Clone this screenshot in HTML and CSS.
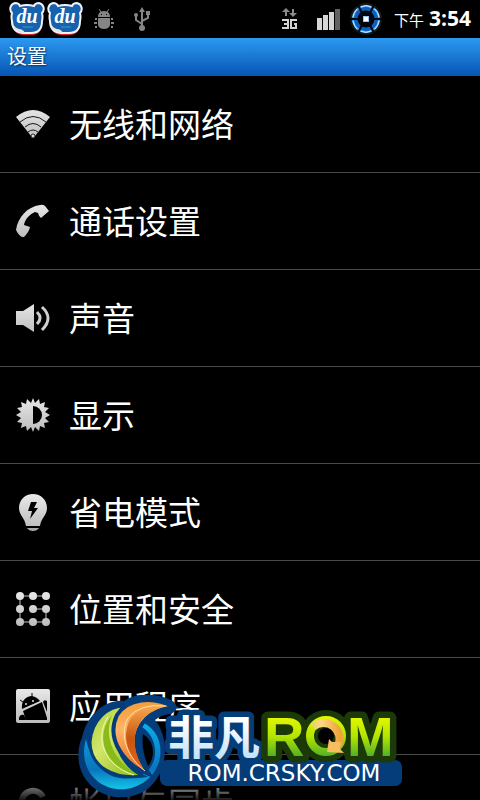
FILE: index.html
```html
<!DOCTYPE html>
<html lang="zh-CN">
<head>
  <meta charset="UTF-8" />
  <meta name="viewport" content="width=device-width, initial-scale=1.0" />
  <title>设置</title>
  <link rel="stylesheet" href="styles.css">
</head>
<body>
  <!-- shared gradients and symbols -->
  <svg class="defs" aria-hidden="true">
    <defs>
      <linearGradient id="silver" x1="0" y1="0" x2="0" y2="34" gradientUnits="userSpaceOnUse">
        <stop offset="0" stop-color="#e8e8e8" />
        <stop offset="1" stop-color="#bcbcbc" />
      </linearGradient>
      <symbol id="du" viewBox="0 0 36 34">
        <path d="M5 25Q5 33 15 33H24Q33 32 33 22Z" fill="#d8201c" />
        <path d="M3 11C0 8 1 2 6 1Q10 1 11 4Q18 2 25 4Q26 1 30 1C35 2 36 8 33 11Q34 15 33 19Q33 31 22 31H14Q3 30 3 19Q2 15 3 11Z" fill="#1762ae" stroke="#eef3f8" stroke-width="2" />
        <path d="M4 22Q6 31 16 31Q14 27 10 27Q6 26 4 22Z" fill="#e4e4e4" />
        <text x="18" y="21" text-anchor="middle" class="du-text">du</text>
        <path d="M14 25H24" stroke="#2f9fd0" />
      </symbol>
    </defs>
  </svg>

  <div class="status-bar">
    <div class="notices">
      <svg class="du-icon" viewBox="0 0 36 34"><use href="#du" /></svg>
      <svg class="du-icon" viewBox="0 0 36 34"><use href="#du" /></svg>
      <svg class="debug-icon" viewBox="0 0 20 20" fill="#858585">
        <path d="M5 0L7 3M15 0L13 3" stroke="#858585" />
        <path d="M4 8Q4 2 10 2T16 8ZM4 9H16V16Q15 20 10 20T4 16Z" />
        <path d="M1 9H3V11H1ZM0 13H3V15H0ZM1 17H3V19H1ZM17 9H19V11H17ZM17 13H20V15H17ZM17 17H19V19H17Z" />
        <path d="M7 5H8V6H7ZM12 5H13V6H12Z" fill="#000" />
      </svg>
      <svg class="usb-icon" viewBox="0 0 16 24" fill="#858585">
        <path d="M8 3V20M8 17L2 13V8M8 14L14 11V7" fill="none" stroke="#858585" stroke-width="2" />
        <path d="M8 0L11 5H5Z" />
        <path d="M12 4H16V8H12Z" />
        <circle cx="2" cy="8" r="2" />
        <circle cx="8" cy="21" r="3" />
      </svg>
    </div>
    <div class="signals">
      <svg class="data-icon" viewBox="0 0 16 22">
        <path d="M4 0L8 4H5V8H3V4H0ZM11 9L7 5H10V1H12V5H15Z" fill="#8b8b8b" />
        <path d="M0 12H6V20H0M2 16H6M15 12H9V20H14V16H12" fill="none" stroke="#d2d2d2" stroke-width="2" />
      </svg>
      <svg class="bars-icon" viewBox="0 0 24 22">
        <path d="M1 10H6V22H1ZM7 7H12V22H7ZM13 4H18V22H13Z" fill="#d6d6d6" />
        <path d="M19 1H24V22H19Z" fill="#626262" />
      </svg>
      <svg class="battery-icon" viewBox="0 0 32 32">
        <circle cx="16" cy="16" r="15" fill="#050c16" stroke="#1c1a10" stroke-width="2" />
        <circle cx="16" cy="16" r="11" fill="none" stroke="#0b5fbe" stroke-width="5" />
        <circle cx="16" cy="16" r="13" fill="none" stroke="#41a9ff" stroke-width="2" />
        <path d="M11 4Q16 1 21 4M11 28Q16 31 21 28M3 14Q4 9 7 6M29 14Q28 9 25 6M3 18Q4 23 7 26M29 18Q28 23 25 26" fill="none" stroke="#c8e8ff" stroke-width="1" />
        <path d="M0 16H9M23 16H32M8 2L12 10M24 2L20 10M8 30L12 22M24 30L20 22" stroke="#02060d" stroke-width="2" />
        <circle cx="16" cy="16" r="8" fill="#02060d" />
        <path d="M13 13H19V19H13Z" fill="#8fc9ff" />
        <path d="M14 14H18V18H14Z" fill="#fff" />
      </svg>
      <div class="clock"><span>下午</span> <b>3:54</b></div>
    </div>
  </div>

  <h1 class="title-bar">设置</h1>

  <nav class="settings">
    <a href="#wireless">
      <svg class="icon" viewBox="0 0 34 34">
        <path d="M0 10Q17 -4 34 10L19 29Q17 32 15 29Z" fill="url(#silver)" />
        <path d="M4 15Q17 4 30 15M9 20Q17 13 25 20M12 25Q17 21 22 25" fill="none" stroke="#161616" stroke-width="1" />
        <circle cx="17" cy="29" r="2" fill="#dedede" stroke="#222" stroke-width="1" />
      </svg>
      <span>无线和网络</span>
    </a>
    <a href="#call">
      <svg class="icon" viewBox="0 0 34 34" fill="url(#silver)">
        <path d="M0 26C2 13 11 3 24 1Q27 0 29 2L33 7L25 14Q23 13 22 9L19 8C14 10 9 15 8 21L14 23Q13 28 8 33Q4 34 0 26Z" />
      </svg>
      <span>通话设置</span>
    </a>
    <a href="#sound">
      <svg class="icon" viewBox="0 0 34 34">
        <path d="M0 10H7L18 3V31L7 24H0Z" fill="url(#silver)" />
        <path d="M21 11Q27 17 21 23M26 6Q38 17 26 29" fill="none" stroke="#cfcfcf" stroke-width="3" />
      </svg>
      <span>声音</span>
    </a>
    <a href="#display">
      <svg class="icon" viewBox="0 0 34 34">
        <path d="M17 0L19 5L23 1L24 6L29 4L28 9L33 10L29 14L34 17L29 20L33 24L28 25L29 30L24 28L23 33L19 29L17 34L15 29L11 33L10 28L5 30L6 25L1 24L5 20L0 17L5 14L1 10L6 9L5 4L10 6L11 1L15 5Z" fill="url(#silver)" />
        <path d="M17 8A9 9 0 0 1 17 26Z" fill="#000" />
      </svg>
      <span>显示</span>
    </a>
    <a href="#power">
      <svg class="icon" viewBox="0 0 34 34">
        <path d="M17 -1C9 -1 3 5 3 13C3 20 9 23 10 31H24C25 23 31 20 31 13C31 5 25 -1 17 -1Z" fill="url(#silver)" />
        <path d="M11 33H23Q21 36 17 36T11 33Z" fill="#a8a8a8" />
        <path d="M15 7H21L18 13H22L14 24L16 16H12Z" fill="#000" />
      </svg>
      <span>省电模式</span>
    </a>
    <a href="#security">
      <svg class="icon" viewBox="0 0 34 34" fill="url(#silver)">
        <path d="M30 4H4V30H30V17H17" fill="none" stroke="#c4c4c4" stroke-width="1" />
        <circle cx="4" cy="4" r="4" /><circle cx="17" cy="4" r="4" /><circle cx="30" cy="4" r="4" />
        <circle cx="4" cy="17" r="4" /><circle cx="17" cy="17" r="4" /><circle cx="30" cy="17" r="4" />
        <circle cx="4" cy="30" r="4" /><circle cx="17" cy="30" r="4" /><circle cx="30" cy="30" r="4" />
      </svg>
      <span>位置和安全</span>
    </a>
    <a href="#apps">
      <svg class="icon" viewBox="0 0 34 34">
        <rect width="34" height="34" rx="2" fill="url(#silver)" />
        <path d="M6 20C5 12 10 7 16 7Q21 8 24 12ZM7 22L26 13L31 29V31H10ZM27 13Q28 10 31 12V23ZM3 29Q4 25 8 26L10 31H3Z" fill="#000" />
        <path d="M7 13L4 11M16 8V4" stroke="#000" stroke-width="1" />
        <circle cx="10" cy="15" r="1" fill="#ddd" /><circle cx="17" cy="12" r="1" fill="#ddd" />
      </svg>
      <span>应用程序</span>
    </a>
    <a href="#accounts">
      <svg class="icon" viewBox="0 0 34 34">
        <path d="M7 21A11 11 0 0 1 27 11M27 15A11 11 0 0 1 8 24" fill="none" stroke="#cfcfcf" stroke-width="6" />
      </svg>
      <span>帐户与同步</span>
    </a>
  </nav>
  <div class="fade"></div>

  <svg class="watermark" viewBox="75 695 330 105" role="img" aria-label="非凡ROM">
    <defs>
      <linearGradient id="ice" x1="0" y1="0" x2="0" y2="1">
        <stop offset="0.3" stop-color="#fff" />
        <stop offset="1" stop-color="#b4dcf8" />
      </linearGradient>
      <linearGradient id="lime" x1="0" y1="715" x2="0" y2="757" gradientUnits="userSpaceOnUse">
        <stop offset="0" stop-color="#eaf800" />
        <stop offset="0.5" stop-color="#b4e600" />
        <stop offset="1" stop-color="#4fae28" />
      </linearGradient>
      <linearGradient id="leaf" x1="0" y1="0" x2="1" y2="1">
        <stop offset="0" stop-color="#a8cc38" />
        <stop offset="0.4" stop-color="#d3e66a" />
        <stop offset="1" stop-color="#86b80c" />
      </linearGradient>
      <linearGradient id="flame" x1="0" y1="0" x2="0" y2="1">
        <stop offset="0" stop-color="#f59a35" />
        <stop offset="0.4" stop-color="#ffb467" />
        <stop offset="1" stop-color="#e86a1c" />
      </linearGradient>
      <linearGradient id="ember" x1="0" y1="0" x2="0" y2="1">
        <stop offset="0" stop-color="#f8a850" />
        <stop offset="0.5" stop-color="#c9560f" />
        <stop offset="1" stop-color="#e8641a" />
      </linearGradient>
      <linearGradient id="ring" x1="0" y1="0" x2="0" y2="1">
        <stop offset="0" stop-color="#0aaee8" />
        <stop offset="0.7" stop-color="#0a75bd" />
        <stop offset="1" stop-color="#12c5ea" />
      </linearGradient>
      <linearGradient id="gold" x1="0" y1="0" x2="1" y2="0">
        <stop offset="0" stop-color="#e2d860" />
        <stop offset="0.3" stop-color="#ffd684" />
        <stop offset="1" stop-color="#eda53a" />
      </linearGradient>
    </defs>

    <rect x="160" y="760" width="242" height="26" rx="7" fill="#043d7a" />
    <text x="168" y="754" class="brand-cn">非凡</text>

    <circle cx="326" cy="736" r="17" class="outline-o" />
    <text x="264" y="756" class="brand-rom">R<tspan x="347">M</tspan></text>
    <circle cx="326" cy="736" r="16" fill="none" stroke="url(#lime)" stroke-width="8" />
    <path d="M313 727A16 16 0 0 1 338 746" fill="none" stroke="url(#gold)" stroke-width="8" />
    <path d="M329 739L332 742L341 742L340 749L344 753L327 752Z" fill="#f6bd61" />

    <!-- swirl emblem -->
    <path d="M82 738C87 714 106 699 124 701C137 691 163 694 174 702Q180 709 171 714Q162 714 155 720C170 739 169 774 145 791C116 807 84 791 79 763Q77 747 82 738Z" fill="#043d7a" />
    <path d="M143 734Q153 740 153 753Q152 762 148 766Q141 750 143 734Z" fill="#000" />
    <path d="M86 739C77 771 101 792 126 789C155 785 167 757 157 736Q152 727 144 723L142 727C156 736 159 756 150 768C137 784 96 787 86 739Z" fill="url(#ring)" />
    <path d="M125 706C107 706 92 720 90 742C90 767 114 780 143 776C121 765 105 735 125 706Z" fill="url(#leaf)" stroke="#043d7a" stroke-width="3" />
    <path d="M112 715C93 738 106 768 138 775C121 767 101 742 112 715Z" fill="#8aba18" />
    <path d="M108 717C94 738 104 766 134 775" fill="none" stroke="#f0f7bb" stroke-width="1" />
    <path d="M174 707C152 695 127 699 117 715C105 740 126 766 149 774C135 755 131 734 146 719Q156 709 174 707Z" fill="url(#flame)" stroke="#043d7a" stroke-width="4" />
    <path d="M168 706Q142 705 131 718C119 738 131 761 145 771C133 753 130 733 144 717Q153 709 168 706Z" fill="url(#ember)" />
    <path d="M166 706Q140 703 128 718C118 736 129 759 145 771" fill="none" stroke="#ffe0ae" stroke-width="1" />

    <text x="284" y="781" text-anchor="middle" class="brand-url">ROM.CRSKY.COM</text>
  </svg>
</body>
</html>
```
FILE: styles.css
```css
* {
  box-sizing: border-box;
}
body {
  position: relative;
  margin: 0;
  height: 100vh;
  overflow: hidden;
  background: #000;
  color: #fff;
  font-family: "Noto Sans", "Noto Sans CJK SC", sans-serif;
}
.defs {
  position: absolute;
  width: 0;
  height: 0;
}
.status-bar {
  display: flex;
  justify-content: space-between;
  align-items: center;
  height: 38px;
  padding: 0 9px;
}
.notices,
.signals {
  display: flex;
  align-items: center;
}
.du-icon {
  width: 36px;
  height: 34px;
  margin-right: 2px;
}
.du-text {
  font: italic bold 20px "Liberation Serif", serif;
  fill: #fff;
}
.debug-icon {
  width: 20px;
  height: 20px;
  margin-left: 9px;
}
.usb-icon {
  width: 16px;
  height: 24px;
  margin-left: 20px;
}
.data-icon {
  width: 16px;
  height: 22px;
  margin-right: 18px;
}
.bars-icon {
  width: 24px;
  height: 22px;
  margin-right: 10px;
}
.battery-icon {
  width: 32px;
  height: 32px;
  margin-right: 12px;
}
.clock {
  display: flex;
  align-items: baseline;
  gap: 5px;
  line-height: 38px;
}
.clock span {
  font-size: 15px;
}
.clock b {
  font-family: "Open Sans", sans-serif;
  font-size: 21px;
}
.title-bar {
  height: 38px;
  margin: 0;
  padding: 0 7px;
  background: linear-gradient(#2c99f0, #0755b4);
  font-size: 20px;
  font-weight: normal;
  line-height: 37px;
  text-shadow: 1px 1px 2px rgba(0, 0, 0, 0.6);
}
.settings a {
  display: flex;
  align-items: center;
  gap: 19px;
  height: 97px;
  padding: 0 16px;
  border-bottom: 1px solid #4a4a4a;
  color: #fff;
  font-size: 33px;
  line-height: 48px;
  text-decoration: none;
}
.settings span {
  padding-top: 2px;
}
.icon {
  flex: none;
  width: 34px;
  height: 34px;
  overflow: visible;
}
.fade {
  position: absolute;
  left: 0;
  right: 0;
  bottom: 0;
  height: 26px;
  background: linear-gradient(transparent, rgba(0, 0, 0, 0.9));
}

/* logo over the bottom of the list */
.watermark {
  position: absolute;
  left: 0;
  right: 0;
  bottom: 0;
  width: 330px;
  height: 105px;
  margin: 0 auto;
}
.brand-cn {
  font: bold 46px "Noto Sans CJK SC", sans-serif;
  fill: url(#ice);
  stroke: #043d7a;
  stroke-width: 11px;
  stroke-linejoin: round;
  paint-order: stroke;
}
.brand-rom {
  font: bold 56px "Liberation Sans", sans-serif;
  fill: url(#lime);
  stroke: #1c3a08;
  stroke-width: 13px;
  stroke-linejoin: round;
  paint-order: stroke;
}
.outline-o {
  fill: #000;
  stroke: #1c3a08;
  stroke-width: 18px;
}
.brand-url {
  font: 23px "DejaVu Sans", sans-serif;
  fill: #fff;
}
```
